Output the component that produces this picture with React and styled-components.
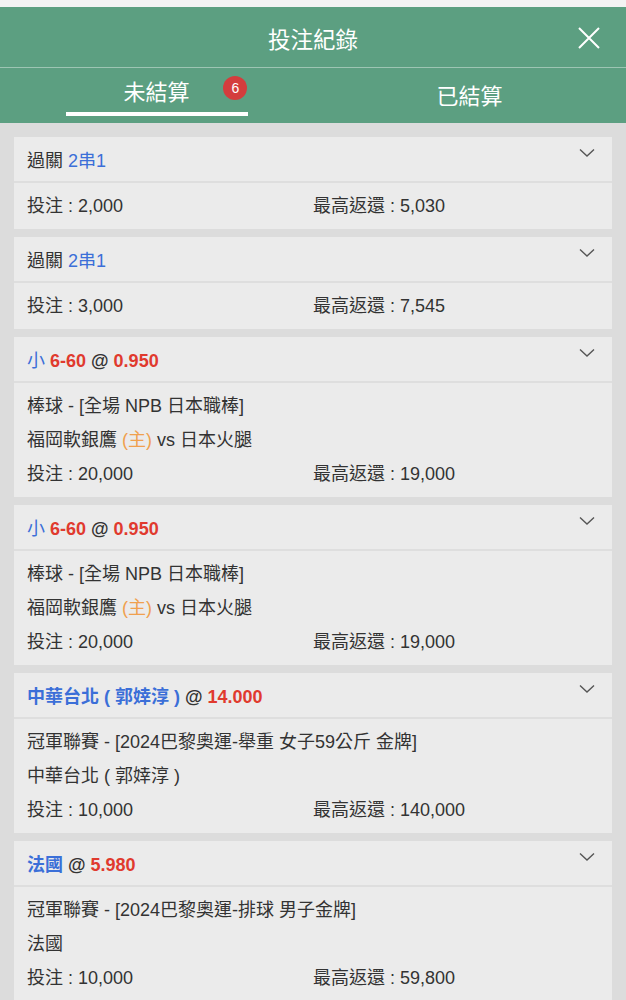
import React from "react";
import styled, { createGlobalStyle } from "styled-components";

const GlobalStyle = createGlobalStyle`
  html, body {
    margin: 0;
    padding: 0;
    background: #dcdcdc;
    font-family: "Liberation Sans", "Noto Sans CJK TC", sans-serif;
    color: #333;
  }
`;

const bets = [
  {
    title: [
      { text: "過關 " },
      { text: "2串1", color: "blue" },
    ],
    stake: "2,000",
    payout: "5,030",
  },
  {
    title: [
      { text: "過關 " },
      { text: "2串1", color: "blue" },
    ],
    stake: "3,000",
    payout: "7,545",
  },
  {
    title: [
      { text: "小 ", color: "blue" },
      { text: "6-60 ", color: "red", bold: true },
      { text: "@ ", bold: true },
      { text: "0.950", color: "red", bold: true },
    ],
    league: "棒球 - [全場 NPB 日本職棒]",
    match: true,
    stake: "20,000",
    payout: "19,000",
  },
  {
    title: [
      { text: "小 ", color: "blue" },
      { text: "6-60 ", color: "red", bold: true },
      { text: "@ ", bold: true },
      { text: "0.950", color: "red", bold: true },
    ],
    league: "棒球 - [全場 NPB 日本職棒]",
    match: true,
    stake: "20,000",
    payout: "19,000",
  },
  {
    title: [
      { text: "中華台北 ( 郭婞淳 ) ", color: "blue", bold: true },
      { text: "@ ", bold: true },
      { text: "14.000", color: "red", bold: true },
    ],
    league: "冠軍聯賽 - [2024巴黎奧運-舉重 女子59公斤 金牌]",
    pick: "中華台北 ( 郭婞淳 )",
    stake: "10,000",
    payout: "140,000",
  },
  {
    title: [
      { text: "法國 ", color: "blue", bold: true },
      { text: "@ ", bold: true },
      { text: "5.980", color: "red", bold: true },
    ],
    league: "冠軍聯賽 - [2024巴黎奧運-排球 男子金牌]",
    pick: "法國",
    stake: "10,000",
    payout: "59,800",
  },
];

const colors = {
  blue: "#3b6fd8",
  red: "#e03a2e",
  orange: "#f0a04e",
};

function Chevron() {
  return (
    <svg width="16" height="10" viewBox="0 0 16 10" fill="none">
      <path d="M1 1.5 L8 8 L15 1.5" stroke="#555" strokeWidth="1.4" />
    </svg>
  );
}

function CloseIcon() {
  return (
    <svg width="24" height="24" viewBox="0 0 24 24" fill="none">
      <path d="M2 2 L22 22 M22 2 L2 22" stroke="#fff" strokeWidth="2" />
    </svg>
  );
}

export default function App() {
  return (
    <>
      <GlobalStyle />
      <TopStrip />
      <Header>
        <Title>投注紀錄</Title>
        <CloseButton>
          <CloseIcon />
        </CloseButton>
      </Header>
      <Tabs>
        <Tab $active>
          <TabLabel>
            未結算
            <Badge>6</Badge>
          </TabLabel>
          <Underline />
        </Tab>
        <Tab>
          <TabLabel>已結算</TabLabel>
        </Tab>
      </Tabs>
      <List>
        {bets.map((bet, i) => (
          <Card key={i}>
            <CardHeader>
              <span>
                {bet.title.map((part, j) => (
                  <Part key={j} $color={part.color} $bold={part.bold}>
                    {part.text}
                  </Part>
                ))}
              </span>
              <Chevron />
            </CardHeader>
            <CardBody>
              {bet.league && <Line>{bet.league}</Line>}
              {bet.match && (
                <Line>
                  福岡軟銀鷹 <Part $color="orange">(主)</Part> vs 日本火腿
                </Line>
              )}
              {bet.pick && <Line>{bet.pick}</Line>}
              <AmountRow>
                <span>投注 : {bet.stake}</span>
                <span>最高返還 : {bet.payout}</span>
              </AmountRow>
            </CardBody>
          </Card>
        ))}
      </List>
    </>
  );
}

const TopStrip = styled.div`
  height: 7px;
  background: #f3f3f3;
`;

const Header = styled.div`
  position: relative;
  height: 60px;
  background: #5c9f81;
  border-bottom: 1px solid rgba(255, 255, 255, 0.4);
  display: flex;
  align-items: center;
  justify-content: center;
`;

const Title = styled.div`
  color: #fff;
  font-size: 22.5px;
  margin-top: 2px;
`;

const CloseButton = styled.div`
  position: absolute;
  right: 25px;
  top: 19px;
  display: flex;
`;

const Tabs = styled.div`
  display: grid;
  grid-template-columns: 1fr 1fr;
  height: 55px;
  background: #5c9f81;
`;

const Tab = styled.div`
  display: flex;
  flex-direction: column;
  align-items: center;
  padding-top: ${(p) => (p.$active ? "11px" : "15px")};
  color: #fff;
  font-size: 22px;
`;

const TabLabel = styled.div`
  position: relative;
  line-height: 28px;
`;

const Badge = styled.span`
  position: absolute;
  left: 100px;
  top: -3px;
  width: 24px;
  height: 24px;
  border-radius: 50%;
  background: #d43d3d;
  color: #fff;
  font-size: 14px;
  line-height: 24px;
  text-align: center;
`;

const Underline = styled.div`
  margin-top: 5px;
  width: 182px;
  height: 4px;
  background: #fff;
`;

const List = styled.div`
  display: flex;
  flex-direction: column;
  gap: 8px;
  padding: 14px 14px 20px;
`;

const Card = styled.div`
  background: #ebebeb;
`;

const CardHeader = styled.div`
  height: 44px;
  display: flex;
  align-items: center;
  justify-content: space-between;
  padding: 0 17px 0 13px;
  font-size: 18px;
  border-bottom: 2px solid #dedede;

  svg {
    margin-top: -12px;
  }
`;

const Part = styled.span`
  color: ${(p) => (p.$color ? colors[p.$color] : "#333")};
  font-weight: ${(p) => (p.$bold ? 700 : 400)};
`;

const CardBody = styled.div`
  padding: 6px 13px;
  font-size: 18px;
`;

const Line = styled.div`
  line-height: 34px;
`;

const AmountRow = styled.div`
  display: grid;
  grid-template-columns: 1fr 1fr;
  line-height: 34px;
`;
